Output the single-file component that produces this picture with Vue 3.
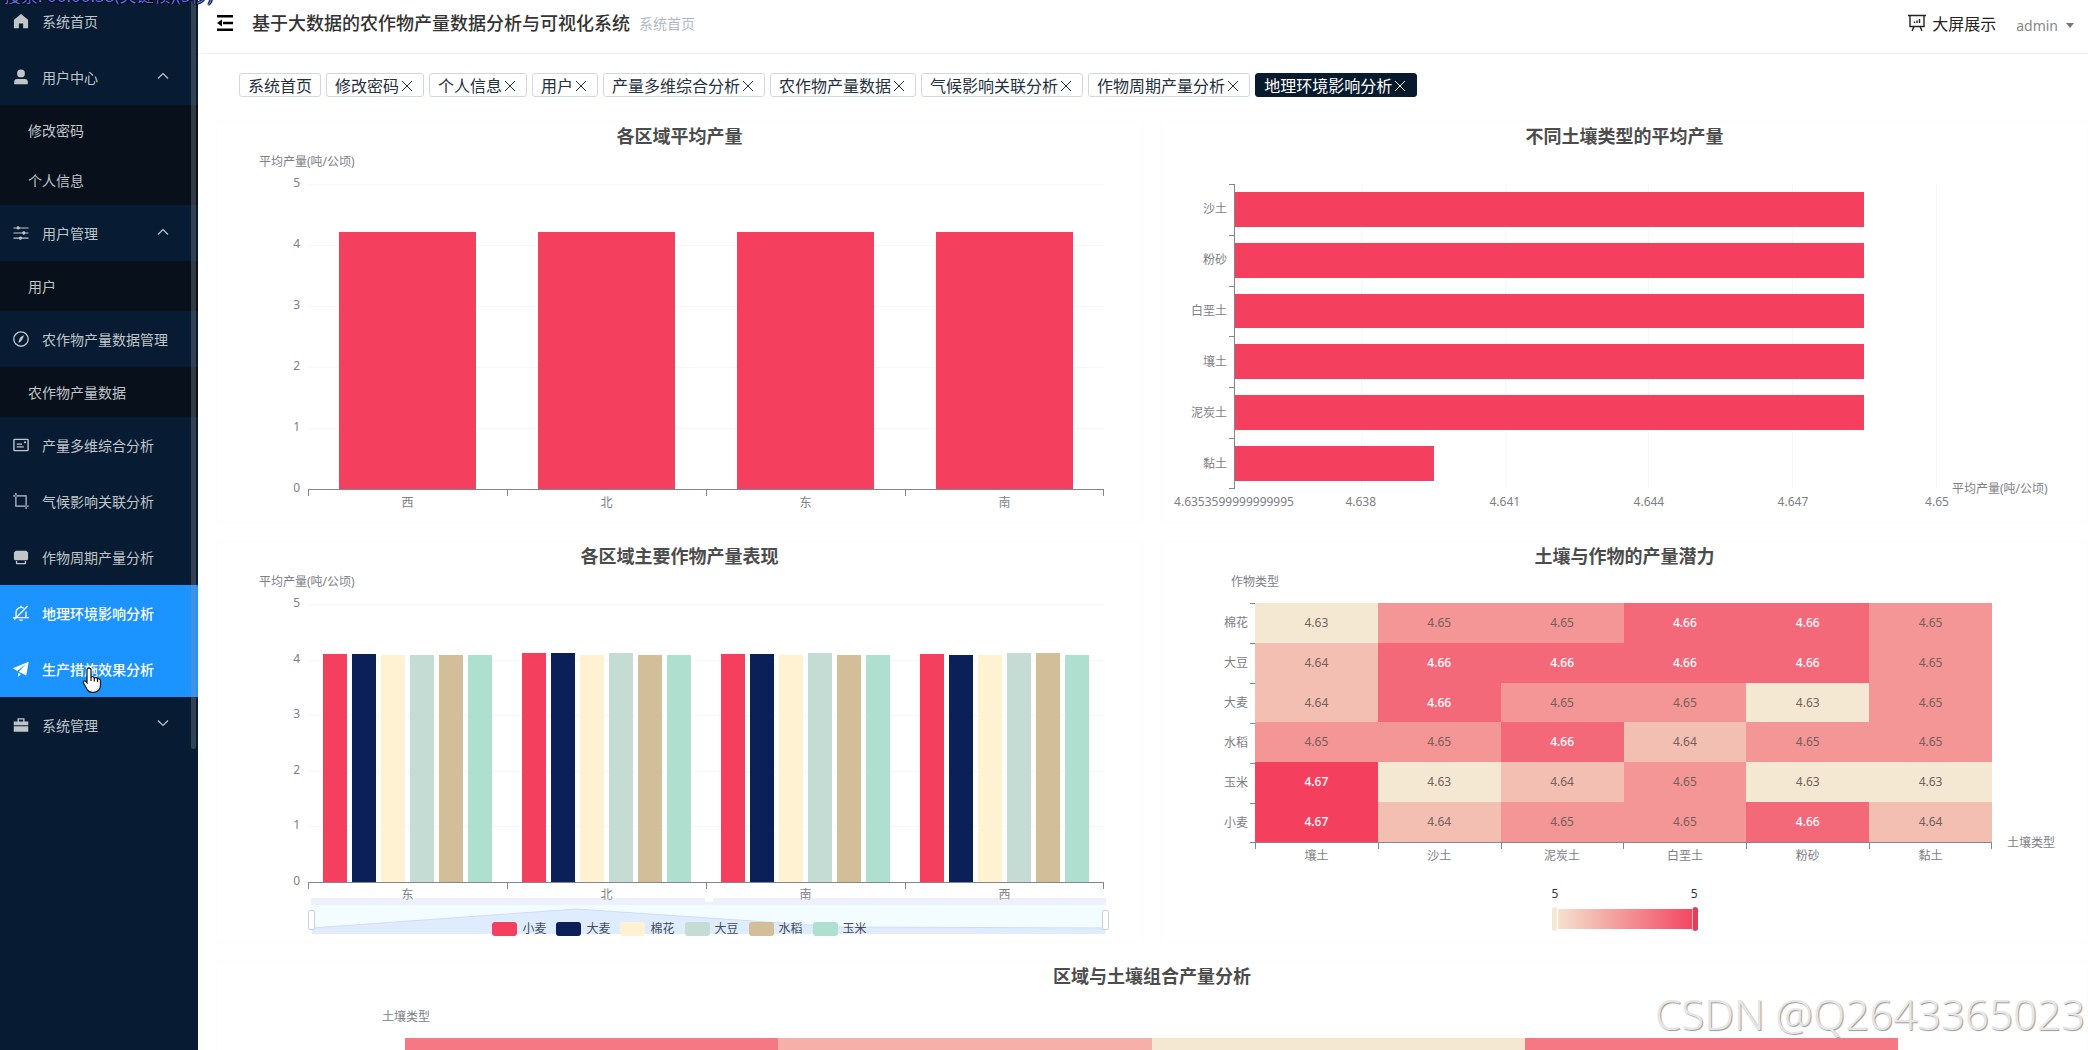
<template>
  <div class="layout">
    <aside class="sidebar">
      <nav class="menu" aria-label="主菜单">
        <template v-for="item in menu" :key="item.title">
          <button v-if="item.children" type="button" class="menu-item">
            <svg class="menu-icon" viewBox="0 0 1024 1024" aria-hidden="true">
              <path :d="icons[item.icon]" />
            </svg>
            <span>{{ item.title }}</span>
            <svg v-if="item.arrow" class="menu-arrow" viewBox="0 0 12 12" aria-hidden="true">
              <path :d="item.arrow === 'up' ? 'M1 7.5 6 2.5l5 5' : 'M1 1.5l5 5 5-5'" />
            </svg>
          </button>
          <a v-else href="#" class="menu-item" :class="{ 'menu-item--active': item.active }">
            <svg
              class="menu-icon"
              :class="{ 'menu-icon--line': item.line }"
              viewBox="0 0 1024 1024"
              aria-hidden="true"
            >
              <path :d="icons[item.icon]" />
            </svg>
            <span>{{ item.title }}</span>
          </a>
          <div v-if="item.children && item.children.length" class="submenu">
            <a v-for="c in item.children" :key="c" href="#" class="submenu-item">{{ c }}</a>
          </div>
        </template>
      </nav>
      <div class="scrollbar" />
      <svg class="cursor" viewBox="0 0 20 26" aria-hidden="true">
        <path
          d="M7 1.2c1.2 0 2 .8 2 2v7c.3-.8 3-.8 3.300.8.5-.6 2.800-.5 3.200 1 .8-.6 3-.1 3 1.700v4.300c0 3.500-2 7.300-6.500 7.300H10c-2.400 0-3.800-1.200-5-3L1.500 16c-.9-1.500.9-2.900 2.300-1.700L5 15.800V3.200c0-1.200.8-2 2-2z"
        />
        <path d="M9 10v4M12.300 11v3.500M15.500 12v3" />
      </svg>
    </aside>

    <div class="page">
      <header class="topbar">
        <button type="button" class="fold" aria-label="折叠菜单">
          <svg viewBox="0 0 16 16" aria-hidden="true">
            <path d="M0 0h16v2.500H0zM6 6.700h10v2.600H6zM0 13.500h16V16H0zM5 4.500v7L0 8z" />
          </svg>
        </button>
        <h1 class="brand">基于大数据的农作物产量数据分析与可视化系统</h1>
        <span class="crumb">系统首页</span>
        <a href="#" class="screen-link">
          <svg viewBox="0 0 18 18" aria-hidden="true">
            <path d="M0 1.500h18M2 1.500v11h14v-11M6 12.500 4 17M12 12.500l2 4.500M6.500 7.500V9M9 6.500V9M11.500 5v4" />
          </svg>
          大屏展示
        </a>
        <button type="button" class="user">admin<span class="caret" /></button>
      </header>

      <main class="content">
        <div class="tabs">
          <div v-for="t in tabs" :key="t.name" class="tab" :class="{ 'tab--active': t.active }">
            <a href="#">{{ t.name }}</a>
            <button v-if="!t.fixed" type="button" :aria-label="'关闭' + t.name">
              <svg viewBox="0 0 12 12" aria-hidden="true"><path d="M1 1l10 10M11 1 1 11" /></svg>
            </button>
          </div>
        </div>

        <div class="cards">
          <!-- 各区域平均产量 -->
          <section class="card">
            <h2>各区域平均产量</h2>
            <p class="axis-name axis-name--unit">平均产量(吨/公顷)</p>
            <div class="frame frame--column">
              <ul class="y-values">
                <li v-for="n in yTicks" :key="n">{{ n }}</li>
              </ul>
              <div class="plot">
                <div class="split-y"><i v-for="n in 5" :key="n" /></div>
                <div class="bands">
                  <div v-for="r in regionAvg" :key="r.name" class="band band--single">
                    <div class="bar bar--rose" :style="{ height: pct(r.value, 5) }" />
                  </div>
                </div>
              </div>
              <ul class="x-cats x-cats--line">
                <li v-for="r in regionAvg" :key="r.name">{{ r.name }}</li>
              </ul>
            </div>
          </section>

          <!-- 不同土壤类型的平均产量 -->
          <section class="card">
            <h2>不同土壤类型的平均产量</h2>
            <p class="axis-name" />
            <div class="frame frame--row">
              <ul class="y-cats">
                <li v-for="s in soilAvg" :key="s.name">{{ s.name }}</li>
              </ul>
              <div class="plot plot--axis">
                <div class="split-x"><i v-for="n in 5" :key="n" /></div>
                <div class="rows">
                  <div v-for="s in soilAvg" :key="s.name" class="row">
                    <div class="row-bar" :style="{ width: s.width + '%' }" />
                  </div>
                </div>
              </div>
              <p class="axis-end">平均产量(吨/公顷)</p>
              <ul class="x-values">
                <li v-for="v in soilTicks" :key="v"><span>{{ v }}</span></li>
              </ul>
            </div>
          </section>

          <!-- 各区域主要作物产量表现 -->
          <section class="card card--legend">
            <h2>各区域主要作物产量表现</h2>
            <p class="axis-name axis-name--unit">平均产量(吨/公顷)</p>
            <div class="frame frame--column frame--zoomed">
              <ul class="y-values">
                <li v-for="n in yTicks" :key="n">{{ n }}</li>
              </ul>
              <div class="plot">
                <div class="split-y"><i v-for="n in 5" :key="n" /></div>
                <div class="bands">
                  <div v-for="g in cropByRegion" :key="g.name" class="band band--group">
                    <div
                      v-for="(v, i) in g.values"
                      :key="i"
                      class="bar"
                      :class="'bar--' + crops[i].color"
                      :style="{ height: pct(v, 5) }"
                    />
                  </div>
                </div>
              </div>
              <div class="x-zoom">
                <ul class="x-cats x-cats--line">
                  <li v-for="g in cropByRegion" :key="g.name">{{ g.name }}</li>
                </ul>
                <div class="slider">
                  <div class="slider-move"><i /></div>
                  <div class="slider-body">
                    <span class="handle" />
                    <svg viewBox="0 0 300 29" preserveAspectRatio="none" aria-hidden="true">
                      <path class="shadow-fill" d="M0 23 100 4 200 22 300 23V29H0z" />
                      <path class="shadow-line" d="M0 23 100 4 200 22 300 23" />
                    </svg>
                    <span class="handle" />
                  </div>
                </div>
              </div>
            </div>
            <ul class="legend">
              <li v-for="c in crops" :key="c.name">
                <i class="swatch" :class="'bar--' + c.color" />{{ c.name }}
              </li>
            </ul>
          </section>

          <!-- 土壤与作物的产量潜力 -->
          <section class="card card--heat">
            <h2>土壤与作物的产量潜力</h2>
            <p class="axis-name axis-name--crop">作物类型</p>
            <div class="frame frame--heat">
              <ul class="y-cats">
                <li v-for="r in heat" :key="r.name">{{ r.name }}</li>
              </ul>
              <div class="heat">
                <template v-for="r in heat" :key="r.name">
                  <div v-for="(v, i) in r.values" :key="i" class="cell" :class="'cell--' + v">4.{{ v }}</div>
                </template>
              </div>
              <p class="axis-end">土壤类型</p>
              <ul class="x-cats">
                <li v-for="s in heatSoils" :key="s">{{ s }}</li>
              </ul>
            </div>
            <div class="visual-map">
              <div class="visual-labels"><span>5</span><span>5</span></div>
              <div class="visual-bar"><i class="visual-low" /><i class="visual-high" /></div>
            </div>
          </section>

          <!-- 区域与土壤组合产量分析 -->
          <section class="card card--wide">
            <h2>区域与土壤组合产量分析</h2>
            <p class="axis-name axis-name--soil">土壤类型</p>
            <div class="combo">
              <div v-for="(c, i) in combo" :key="i" class="combo-cell" :class="'combo-cell--' + c" />
            </div>
          </section>
        </div>
      </main>
    </div>

    <div class="player-osd">搜索: 00:00:38(关键帧)(5秒)</div>
    <div class="watermark">CSDN @Q2643365023</div>
  </div>
</template>

<script setup>
const icons = {
  home: "M512 110 110 440V920h280V660h244v260h280V440z",
  user: "M290 310a222 222 0 1 0 444 0 222 222 0 1 0-444 0m570 620H164a40 40 0 0 1-40-40v-90a170 170 0 0 1 170-170h436a170 170 0 0 1 170 170v90a40 40 0 0 1-40 40z",
  operation:
    "M389.440 768a96 96 0 0 1 181 0H940v64H570.500a96 96 0 0 1-181 0H84v-64zm192-288a96 96 0 0 1 181 0H940v64H762.500a96 96 0 0 1-181 0H84v-64zm-320-288a96 96 0 0 1 181 0H940v64H442.500a96 96 0 0 1-181 0H84v-64z",
  compass:
    "M512 960a448 448 0 1 1 0-896 448 448 0 0 1 0 896m0-76a372 372 0 1 0 0-744 372 372 0 0 0 0 744M670 315C640 429 610 513 569 569c-36 55-90 108-184 157a13 13 0 0 1-17-17c20-114 52-198 87-253 36-56 100-108 198-158a13 13 0 0 1 17 17",
  postcard:
    "M150 150h724a80 80 0 0 1 80 80v564a80 80 0 0 1-80 80H150a80 80 0 0 1-80-80V230a80 80 0 0 1 80-80m0 76v572h724V226zM680 360a60 60 0 1 1 120 0 60 60 0 1 1-120 0M270 430h300v70H270zm0 150h400v70H270z",
  crop: "M256 768h690v70H186V60h70zM838 186v780h-70V256H70v-70z",
  printer:
    "M220 160h584l110 90v380a60 60 0 0 1-60 60H170a60 60 0 0 1-60-60V250zM220 740h80v110h424V740h80v130a50 50 0 0 1-50 50H270a50 50 0 0 1-50-50z",
  mute: "M230 780V480a282 282 0 0 1 440-234M794 420v360M60 780h904M512 100v90M420 920h190M890 110 130 890",
  promotion: "m50 470 900-370-140 780-430-210 430-440-520 400zM350 960V720l150 84z",
  briefcase:
    "M310 310V130h404v180h210v210H100V310zM100 590h824v310H100zm290-280h244V206H390z",
};

const menu = [
  { title: "系统首页", icon: "home" },
  { title: "用户中心", icon: "user", arrow: "up", children: ["修改密码", "个人信息"] },
  { title: "用户管理", icon: "operation", arrow: "up", children: ["用户"] },
  { title: "农作物产量数据管理", icon: "compass", children: ["农作物产量数据"] },
  { title: "产量多维综合分析", icon: "postcard" },
  { title: "气候影响关联分析", icon: "crop" },
  { title: "作物周期产量分析", icon: "printer" },
  { title: "地理环境影响分析", icon: "mute", line: true, active: true },
  { title: "生产措施效果分析", icon: "promotion", active: true },
  { title: "系统管理", icon: "briefcase", arrow: "down", children: [] },
];

const tabs = [
  { name: "系统首页", fixed: true },
  { name: "修改密码" },
  { name: "个人信息" },
  { name: "用户" },
  { name: "产量多维综合分析" },
  { name: "农作物产量数据" },
  { name: "气候影响关联分析" },
  { name: "作物周期产量分析" },
  { name: "地理环境影响分析", active: true },
];

const yTicks = [5, 4, 3, 2, 1, 0];

const regionAvg = ["西", "北", "东", "南"].map((name) => ({ name, value: 4.22 }));

/* width: 占坐标轴 4.63536 - 4.65 的百分比 */
const soilAvg = [
  { name: "沙土", width: 89.6 },
  { name: "粉砂", width: 89.6 },
  { name: "白垩土", width: 89.6 },
  { name: "壤土", width: 89.6 },
  { name: "泥炭土", width: 89.6 },
  { name: "黏土", width: 28.4 },
];
const soilTicks = ["4.6353599999999995", "4.638", "4.641", "4.644", "4.647", "4.65"];

const crops = [
  { name: "小麦", color: "rose" },
  { name: "大麦", color: "navy" },
  { name: "棉花", color: "cream" },
  { name: "大豆", color: "sage" },
  { name: "水稻", color: "sand" },
  { name: "玉米", color: "mint" },
];
const cropByRegion = [
  { name: "东", values: [4.1, 4.1, 4.09, 4.09, 4.08, 4.08] },
  { name: "北", values: [4.11, 4.12, 4.09, 4.11, 4.08, 4.09] },
  { name: "南", values: [4.1, 4.1, 4.09, 4.11, 4.09, 4.08] },
  { name: "西", values: [4.1, 4.08, 4.09, 4.11, 4.12, 4.08] },
];

/* 只存小数部分: 63 -> 4.63 */
const heatSoils = ["壤土", "沙土", "泥炭土", "白垩土", "粉砂", "黏土"];
const heat = [
  { name: "棉花", values: [63, 65, 65, 66, 66, 65] },
  { name: "大豆", values: [64, 66, 66, 66, 66, 65] },
  { name: "大麦", values: [64, 66, 65, 65, 63, 65] },
  { name: "水稻", values: [65, 65, 66, 64, 65, 65] },
  { name: "玉米", values: [67, 63, 64, 65, 63, 63] },
  { name: "小麦", values: [67, 64, 65, 65, 66, 64] },
];

const combo = ["high", "mid", "low", "high"];

const pct = (v, max) => `${(v / max) * 100}%`;
</script>

<style>
body {
  overflow: hidden;
}
</style>

<style scoped>
.layout {
  --axis: #83868c;
  --label: #7d8086;
  --rose: #f4405e;

  display: flex;
  height: 100vh;
  overflow: hidden;
  position: relative;
  background: #fff;
  color: #333;
  font-family: "Noto Sans", "Noto Sans CJK SC", sans-serif;
  font-size: 12px;
}

.layout *,
.layout *::before {
  box-sizing: border-box;
}

h1,
h2,
p,
ul {
  margin: 0;
  padding: 0;
  list-style: none;
}

a {
  color: inherit;
  text-decoration: none;
}

button {
  padding: 0;
  border: 0;
  background: none;
  color: inherit;
  font: inherit;
  text-align: left;
}

/* Sidebar */
.sidebar {
  flex: 0 0 198px;
  position: relative;
  overflow: hidden;
  background: #071c32;
  color: #c0c5ca;
}

.menu {
  margin-top: -7px;
}

.menu-item {
  display: flex;
  align-items: center;
  gap: 12px;
  width: 100%;
  height: 56px;
  padding: 0 29px 0 12px;
  font-size: 14px;
  white-space: nowrap;
}

.menu-item--active {
  background: #1b94ff;
  color: #fff;
  font-weight: 500;
}

.menu-icon {
  flex: 0 0 18px;
  height: 18px;
  fill: currentColor;
  fill-rule: evenodd;
}

.menu-icon--line {
  fill: none;
  stroke: currentColor;
  stroke-width: 72;
}

.menu-arrow {
  width: 12px;
  height: 12px;
  margin-left: auto;
  fill: none;
  stroke: currentColor;
  stroke-width: 1.2;
}

.submenu {
  background: #08111b;
}

.submenu-item {
  display: block;
  height: 50px;
  padding-left: 28px;
  line-height: 52px;
  font-size: 14px;
}

.scrollbar {
  position: absolute;
  top: 0;
  right: 2px;
  width: 5px;
  height: 749px;
  border-radius: 3px;
  background: rgba(144, 147, 153, 0.32);
}

.cursor {
  position: absolute;
  top: 667px;
  left: 82px;
  width: 20px;
  height: 26px;
  fill: #fff;
  stroke: #111;
  stroke-width: 1.2;
}

/* Header */
.page {
  flex: 1;
  min-width: 0;
}

.topbar {
  display: flex;
  align-items: center;
  height: 54px;
  padding: 0 14px 8px 19px;
  border-bottom: 1px solid #f0f3fb;
}

.fold {
  width: 16px;
  height: 16px;
  margin-right: 19px;
}

.fold svg {
  display: block;
}

.brand {
  font-size: 18px;
  font-weight: 500;
  line-height: 24px;
}

.crumb {
  margin-left: 9px;
  color: #b0b7c6;
  font-size: 14px;
}

.screen-link {
  display: flex;
  align-items: center;
  gap: 6px;
  margin-left: auto;
  color: #222;
  font-size: 16px;
}

.screen-link svg {
  width: 18px;
  height: 18px;
  fill: none;
  stroke: currentColor;
  stroke-width: 1.4;
}

.user {
  display: flex;
  align-items: center;
  gap: 8px;
  margin: 6px 0 0 20px;
  color: #888;
  font-size: 14px;
}

.caret {
  border: 4px solid transparent;
  border-top: 5px solid #777;
  border-bottom: 0;
}

/* Tabs */
.content {
  padding: 19px 1px 0 19px;
}

.tabs {
  display: flex;
  gap: 5px;
  margin-bottom: 25px;
  padding-left: 22px;
}

.tab {
  display: flex;
  align-items: center;
  height: 24px;
  padding: 2px 8px 0;
  border: 1px solid #d3d7e2;
  border-radius: 3px;
  color: #25303d;
  font-size: 16px;
  line-height: 24px;
  white-space: nowrap;
}

.tab--active {
  border-color: #071a2e;
  background: #071a2e;
  color: #fff;
}

.tab button {
  width: 16px;
  height: 12px;
  padding: 0 2px;
}

.tab svg {
  display: block;
  width: 12px;
  height: 12px;
  fill: none;
  stroke: currentColor;
}

/* Cards */
.cards {
  display: grid;
  grid-template-columns: 1fr 1fr;
  gap: 20px;
}

.card {
  display: grid;
  grid-template-rows: 30px 32px 1fr;
  height: 400px;
  min-width: 0;
  border-radius: 4px;
  box-shadow: 0 0 2px rgba(0, 40, 60, 0.06);
}

.card--legend {
  grid-template-rows: 30px 32px 338px 14px;
}

.card--heat {
  grid-template-rows: 30px 31px 264px 1fr;
}

.card--wide {
  grid-column: 1 / -1;
  grid-template-rows: 30px 46px 1fr;
}

h2 {
  color: #4c4c4c;
  font-size: 18px;
  font-weight: 700;
  line-height: 28px;
  text-align: center;
}

.axis-name {
  color: var(--label);
  line-height: 20px;
}

.axis-name--unit {
  padding-left: 42px;
}

.axis-name--crop {
  padding-left: 69px;
}

.axis-name--soil {
  padding: 15px 0 0 165px;
}

.frame {
  display: grid;
  min-height: 0;
  color: var(--label);
  line-height: 12px;
}

.frame--column {
  grid-template: 1fr 33px / 91px 1fr 38px;
}

.frame--zoomed {
  grid-template-rows: 1fr 60px;
}

.frame--row {
  grid-template: 1fr 33px / 72px 1fr 150px;
}

.frame--heat {
  grid-template: 240px 24px / 93px 1fr 95px;
}

.y-values {
  display: flex;
  flex-direction: column;
  justify-content: space-between;
  margin: -7px 8px -5px 0;
  text-align: right;
}

.plot {
  display: grid;
}

.plot > * {
  grid-area: 1 / 1;
}

.plot--axis {
  border-left: 1px solid var(--axis);
}

.split-y {
  display: flex;
  flex-direction: column;
}

.split-y i {
  flex: 1;
  border-top: 1px solid #f7f7f8;
}

.bands {
  display: flex;
}

.band {
  flex: 1;
  display: flex;
  align-items: flex-end;
}

.band--single {
  padding: 0 31px;
}

.band--group {
  gap: 5px;
  padding: 0 15px;
}

.bar {
  flex: 1;
}

.bar--rose {
  background: var(--rose);
}

.bar--navy {
  background: #0b2058;
}

.bar--cream {
  background: #fff2d3;
}

.bar--sage {
  background: #c5dcd4;
}

.bar--sand {
  background: #d2be99;
}

.bar--mint {
  background: #aedfcf;
}

/* 刻度线画在每个类目的背景上 */
.x-cats {
  display: flex;
  grid-column: 2;
}

.x-cats--line {
  border-top: 1px solid var(--axis);
}

.x-cats li {
  flex: 1;
  padding-top: 7px;
  background: linear-gradient(var(--axis), var(--axis)) left top / 1px 6px no-repeat;
  text-align: center;
}

.x-cats li:last-child {
  background:
    linear-gradient(var(--axis), var(--axis)) left top / 1px 6px no-repeat,
    linear-gradient(var(--axis), var(--axis)) right top / 1px 6px no-repeat;
}

.y-cats {
  display: flex;
  flex-direction: column;
}

.y-cats li {
  flex: 1;
  display: flex;
  align-items: center;
  justify-content: flex-end;
  padding-right: 7px;
  background: linear-gradient(var(--axis), var(--axis)) right top / 5px 1px no-repeat;
}

.y-cats li:last-child {
  background:
    linear-gradient(var(--axis), var(--axis)) right top / 5px 1px no-repeat,
    linear-gradient(var(--axis), var(--axis)) right bottom / 5px 1px no-repeat;
}

.split-x,
.x-values {
  display: flex;
}

.split-x i {
  flex: 300 0 0;
  border-right: 1px solid #f7f7f8;
}

.split-x i:first-child {
  flex-grow: 264;
}

.rows {
  display: flex;
  flex-direction: column;
}

.row {
  flex: 1;
  padding: 8px 0;
}

.row-bar {
  height: 100%;
  background: var(--rose);
}

.x-values {
  grid-column: 2;
  padding-top: 7px;
}

.x-values li {
  flex: 300 0 0;
  min-width: 0;
}

.x-values li:first-child {
  flex-grow: 264;
}

.x-values li:last-child {
  flex: 0 0 0;
}

.x-values span {
  display: flex;
  justify-content: center;
  width: 0;
}

.axis-end {
  align-self: end;
  padding-left: 15px;
  margin-bottom: -6px;
  white-space: nowrap;
}

/* Data zoom */
.x-zoom {
  display: grid;
  grid-column: 2;
  grid-template: 16px 36px / 1fr;
}

.x-zoom .x-cats {
  grid-column: 1;
}

.x-zoom .x-cats li {
  padding-top: 6px;
}

.slider {
  margin: 0 -2px 0 3px;
}

.slider-move {
  height: 7px;
  background: rgba(210, 219, 246, 0.4);
}

.slider-move i {
  display: block;
  width: 8px;
  height: 4px;
  margin: 0 auto;
  background: #fff;
}

.slider-body {
  display: flex;
  align-items: center;
  height: 29px;
  background: #f3fdff;
}

.slider-body svg {
  flex: 1;
  min-width: 0;
  height: 29px;
}

.shadow-fill {
  fill: #dfecff;
}

.shadow-line {
  fill: none;
  stroke: #cfdcf8;
  vector-effect: non-scaling-stroke;
}

.handle {
  z-index: 1;
  width: 7px;
  height: 20px;
  margin: 0 -3px;
  border: 1px solid #c5cfea;
  border-radius: 2px;
  background: #fff;
}

.legend {
  display: flex;
  justify-content: center;
  gap: 10px;
  margin-top: -20px;
  height: 14px;
  z-index: 1;
  color: #444a55;
  line-height: 14px;
}

.legend li {
  display: flex;
  gap: 5px;
}

.swatch {
  width: 25px;
  height: 14px;
  border-radius: 3px;
}

/* Heatmap */
.heat {
  display: grid;
  grid-template-columns: repeat(6, 1fr);
  grid-auto-rows: 1fr;
  border-bottom: 1px solid var(--axis);
}

.cell {
  display: flex;
  align-items: center;
  justify-content: center;
  color: #75605c;
}

.cell--63 {
  background: #f5e8d3;
}

.cell--64 {
  background: #f4bfb3;
}

.cell--65 {
  background: #f49596;
}

.cell--66 {
  background: #f4697a;
  color: #fff;
  font-weight: 500;
}

.cell--67 {
  background: #f4405e;
  color: #fff;
  font-weight: 500;
}

.visual-map {
  width: 146px;
  margin: 21px auto 0;
}

.visual-labels {
  display: flex;
  justify-content: space-between;
  line-height: 12px;
}

.visual-bar {
  display: flex;
  align-items: center;
  justify-content: space-between;
  height: 20px;
  margin-top: 9px;
  background: linear-gradient(90deg, #f5e8d3, #f49596 50%, #f4405e);
}

.visual-bar i {
  width: 6px;
  height: 24px;
  border-radius: 3px;
}

.visual-low {
  border-right: 1px solid #fff;
  background: #f5e8d3;
}

.visual-high {
  border-left: 1px solid #f9b0b8;
  background: #e63c5a;
}

.combo {
  display: flex;
  padding: 0 189px 0 188px;
}

.combo-cell {
  flex: 1;
}

.combo-cell--high {
  background: #f67884;
}

.combo-cell--mid {
  background: #f6afa9;
}

.combo-cell--low {
  background: #f5e8d3;
}

/* Overlays */
.player-osd {
  position: absolute;
  top: -15px;
  left: 4px;
  color: #5a72ee;
  font-size: 17px;
  line-height: 22px;
  white-space: nowrap;
  text-shadow: -1px 0 #000, 1px 0 #000, 0 -1px #000, 0 1px #000;
}

.watermark {
  position: absolute;
  right: 3px;
  bottom: 11px;
  color: #e6e6e6;
  font-size: 42px;
  font-weight: 300;
  line-height: 50px;
  text-shadow: 1px 1px 1px #999;
}
</style>
